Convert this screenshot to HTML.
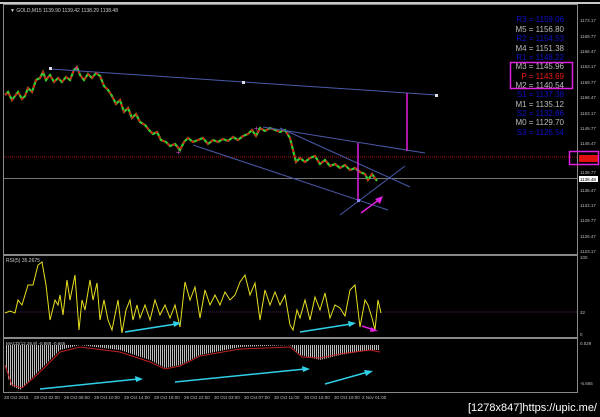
<!DOCTYPE html>
<html><head><style>
html,body{margin:0;padding:0;background:#000;width:600px;height:417px;overflow:hidden}
svg{display:block}
text{font-family:"Liberation Sans",sans-serif}
</style></head><body>
<svg width="600" height="417" viewBox="0 0 600 417" xmlns="http://www.w3.org/2000/svg">
<defs>
<pattern id="h" width="2" height="4" patternUnits="userSpaceOnUse"><rect width="1" height="4" fill="#bdbdbd"/></pattern>
</defs>
<rect width="600" height="417" fill="#000"/>
<rect x="0" y="2" width="600" height="2" fill="#c8c8c8"/>
<rect x="3.5" y="4.5" width="574" height="250" fill="none" stroke="#888" stroke-width="1"/>
<rect x="3.5" y="255.5" width="574" height="82" fill="none" stroke="#888" stroke-width="1"/>
<rect x="3.5" y="338.5" width="574" height="54" fill="none" stroke="#888" stroke-width="1"/>
<text x="10" y="12" font-size="5" fill="#ccc">▼ GOLD,M15 1139.90 1139.42 1138.29 1138.48</text>
<line x1="4" y1="157" x2="577" y2="157" stroke="#a01010" stroke-dasharray="1,1"/>
<line x1="4" y1="178.5" x2="577" y2="178.5" stroke="#777"/>
<polyline fill="none" stroke="#2fd02f" stroke-width="2.2" points="5,95 8,92 12,100 15,96 18,92 22,99 25,96 28,88 32,92 36,80 40,78 43,72 46,80 50,75 54,82 58,78 62,82 66,77 70,80 74,70 77,67 80,75 84,80 88,74 92,78 96,73 100,76 104,86 108,90 112,96 116,104 120,100 124,112 128,108 132,118 136,114 140,122 145,125 149,130 153,134 157,132 161,140 166,142 170,146 175,144 180,150 184,142 188,138 193,142 198,140 203,138 208,144 213,140 218,142 223,139 228,141 233,137 238,140 243,136 248,134 252,130 256,136 260,128 265,131 270,128 275,130 280,132 285,130 290,138 293,150 296,162 300,158 305,162 310,158 315,156 320,164 325,160 330,166 335,164 340,168 345,165 350,170 355,168 360,172 365,174 368,180 372,174 377,181"/>
<polyline fill="none" stroke="#e01818" stroke-width="1.8" stroke-dasharray="3,3" points="5,95 8,92 12,100 15,96 18,92 22,99 25,96 28,88 32,92 36,80 40,78 43,72 46,80 50,75 54,82 58,78 62,82 66,77 70,80 74,70 77,67 80,75 84,80 88,74 92,78 96,73 100,76 104,86 108,90 112,96 116,104 120,100 124,112 128,108 132,118 136,114 140,122 145,125 149,130 153,134 157,132 161,140 166,142 170,146 175,144 180,150 184,142 188,138 193,142 198,140 203,138 208,144 213,140 218,142 223,139 228,141 233,137 238,140 243,136 248,134 252,130 256,136 260,128 265,131 270,128 275,130 280,132 285,130 290,138 293,150 296,162 300,158 305,162 310,158 315,156 320,164 325,160 330,166 335,164 340,168 345,165 350,170 355,168 360,172 365,174 368,180 372,174 377,181"/>
<g stroke="#4a5aa8" stroke-width="1" fill="none">
<line x1="50" y1="69" x2="437" y2="95"/>
<line x1="263" y1="127" x2="425" y2="153"/>
<line x1="280" y1="128" x2="410" y2="187"/>
<line x1="193" y1="145" x2="388" y2="210"/>
<line x1="340" y1="215" x2="405" y2="166"/>
</g>
<rect x="49" y="67" width="3" height="3" fill="#dde"/>
<rect x="242" y="81" width="3" height="3" fill="#dde"/>
<rect x="435" y="94" width="3" height="3" fill="#dde"/>
<rect x="357" y="199" width="3" height="3" fill="#88f"/>
<g stroke="#e020e0" stroke-width="1.5">
<line x1="407" y1="93" x2="407" y2="151"/>
<line x1="358" y1="143" x2="358" y2="200"/>
<line x1="361" y1="213" x2="380" y2="199"/>
</g>
<polygon points="383,196 375,199 380,204" fill="#e020e0"/>
<text x="74" y="71" font-size="8" fill="#d040d0">+</text>
<text x="176" y="155" font-size="8" fill="#d040d0">+</text>
<text x="254" y="131" font-size="8" fill="#d040d0">+</text>
<g font-size="8" text-anchor="end">
<text x="564" y="22" fill="#1010c8">R3 = 1159.06</text>
<text x="564" y="32" fill="#bbb">M5 = 1156.80</text>
<text x="564" y="41" fill="#1010c8">R2 = 1154.53</text>
<text x="564" y="51" fill="#bbb">M4 = 1151.38</text>
<text x="564" y="60" fill="#1010c8">R1 = 1148.22</text>
<text x="564" y="69" fill="#bbb">M3 = 1145.96</text>
<text x="564" y="79" fill="#ee1a1a">P  = 1143.69</text>
<text x="564" y="88" fill="#bbb">M2 = 1140.54</text>
<text x="564" y="97" fill="#1010c8">S1 = 1137.38</text>
<text x="564" y="107" fill="#bbb">M1 = 1135.12</text>
<text x="564" y="116" fill="#1010c8">S2 = 1132.86</text>
<text x="564" y="125" fill="#bbb">M0 = 1129.70</text>
<text x="564" y="135" fill="#1010c8">S3 = 1126.54</text>
</g>
<rect x="510.5" y="62.5" width="62" height="26" fill="none" stroke="#e020e0" stroke-width="1.5"/>
<g font-size="4.5" fill="#bbb">
<text x="580" y="22">1173.17</text><text x="580" y="38">1169.77</text><text x="580" y="53">1166.47</text>
<text x="580" y="68">1163.17</text><text x="580" y="84">1159.77</text><text x="580" y="99">1156.47</text>
<text x="580" y="115">1153.17</text><text x="580" y="130">1149.77</text><text x="580" y="145">1146.47</text>
<text x="580" y="174">1139.77</text><text x="580" y="192">1136.47</text><text x="580" y="207">1133.17</text>
<text x="580" y="222">1129.77</text><text x="580" y="238">1126.47</text><text x="580" y="253">1123.17</text>
<text x="580" y="259">100</text><text x="580" y="314">32</text><text x="580" y="336">0</text>
<text x="580" y="345">0.529</text><text x="580" y="385">-5.665</text>
</g>
<rect x="579" y="155" width="19" height="7" fill="#e01010"/>
<rect x="569.5" y="151.5" width="29" height="13" fill="none" stroke="#e020e0" stroke-width="1.5"/>
<rect x="579" y="176" width="19" height="6" fill="#fff"/>
<text x="580" y="181" font-size="4.5" fill="#000">1138.48</text>
<text x="6" y="262" font-size="5" fill="#ccc">RSI(5) 35.2675</text>
<line x1="4" y1="312" x2="577" y2="312" stroke="#502050" stroke-dasharray="1,1"/>
<polyline fill="none" stroke="#e8e020" stroke-width="1" points="5,313 10,311 15,313 18,300 22,305 28,285 33,285 38,265 42,262 46,285 50,320 55,300 58,305 60,295 63,315 67,280 70,300 75,275 79,330 82,300 85,310 90,280 93,300 97,283 100,320 104,300 108,320 112,330 118,300 122,333 126,310 130,300 133,320 137,305 140,318 145,305 150,320 155,300 160,315 165,305 170,318 175,305 180,327 185,282 190,300 195,287 200,318 205,290 210,305 215,295 220,305 225,292 230,300 235,295 240,282 245,275 250,295 255,283 260,320 265,290 270,305 275,292 280,305 285,295 290,325 293,330 297,310 300,318 305,300 310,320 315,297 320,310 325,293 330,318 335,305 340,308 345,316 350,290 355,285 360,327 365,300 368,305 372,318 375,330 378,300 381,313"/>
<g stroke="#30d0e8" stroke-width="1.5"><line x1="125" y1="332" x2="176" y2="324"/><line x1="300" y1="332" x2="351" y2="324"/></g>
<polygon points="181,323 173,321 174,327" fill="#30d0e8"/>
<polygon points="356,323 348,321 349,327" fill="#30d0e8"/>
<line x1="362" y1="326" x2="374" y2="330" stroke="#e020e0" stroke-width="1.5"/>
<polygon points="378,331 371,327 370,332" fill="#e020e0"/>
<text x="6" y="345" font-size="4.5" fill="#ccc">MACD(12,26,9) -0.888 -0.665</text>
<path d="M5,345 L380,345 L380,350 L370,350 L340,355 L320,360 L300,355 L290,345 L240,347 L200,355 L180,365 L165,368 L150,360 L120,350 L80,345 L60,350 L40,370 L20,390 L10,385 L5,365 Z" fill="url(#h)"/>
<polyline fill="none" stroke="#c02020" stroke-width="1" points="5,365 12,385 22,388 40,372 60,352 80,347 120,352 150,362 165,369 180,366 200,356 240,349 290,347 302,357 320,358 340,354 370,350 380,352"/>
<g stroke="#30d0e8" stroke-width="1.5"><line x1="40" y1="389" x2="138" y2="379"/><line x1="175" y1="382" x2="305" y2="369"/><line x1="325" y1="384" x2="368" y2="372"/></g>
<polygon points="143,379 135,376 136,382" fill="#30d0e8"/>
<polygon points="310,369 302,366 303,372" fill="#30d0e8"/>
<polygon points="373,371 364,370 366,376" fill="#30d0e8"/>
<g font-size="4.5" fill="#bbb">
<text x="4" y="399">28 Oct 2015</text><text x="34" y="399">29 Oct 02:00</text><text x="64" y="399">29 Oct 06:00</text>
<text x="94" y="399">29 Oct 10:00</text><text x="124" y="399">29 Oct 14:00</text><text x="154" y="399">29 Oct 18:00</text>
<text x="184" y="399">29 Oct 22:00</text><text x="214" y="399">30 Oct 03:00</text><text x="244" y="399">30 Oct 07:00</text>
<text x="274" y="399">30 Oct 11:00</text><text x="304" y="399">30 Oct 15:00</text><text x="334" y="399">30 Oct 19:00</text>
<text x="362" y="399">2 Nov 01:00</text>
</g>
<text x="597" y="411" font-size="11" fill="#fff" text-anchor="end" font-family="Liberation Mono,monospace">[1278x847]https://upic.me/</text>
</svg>
</body></html>
